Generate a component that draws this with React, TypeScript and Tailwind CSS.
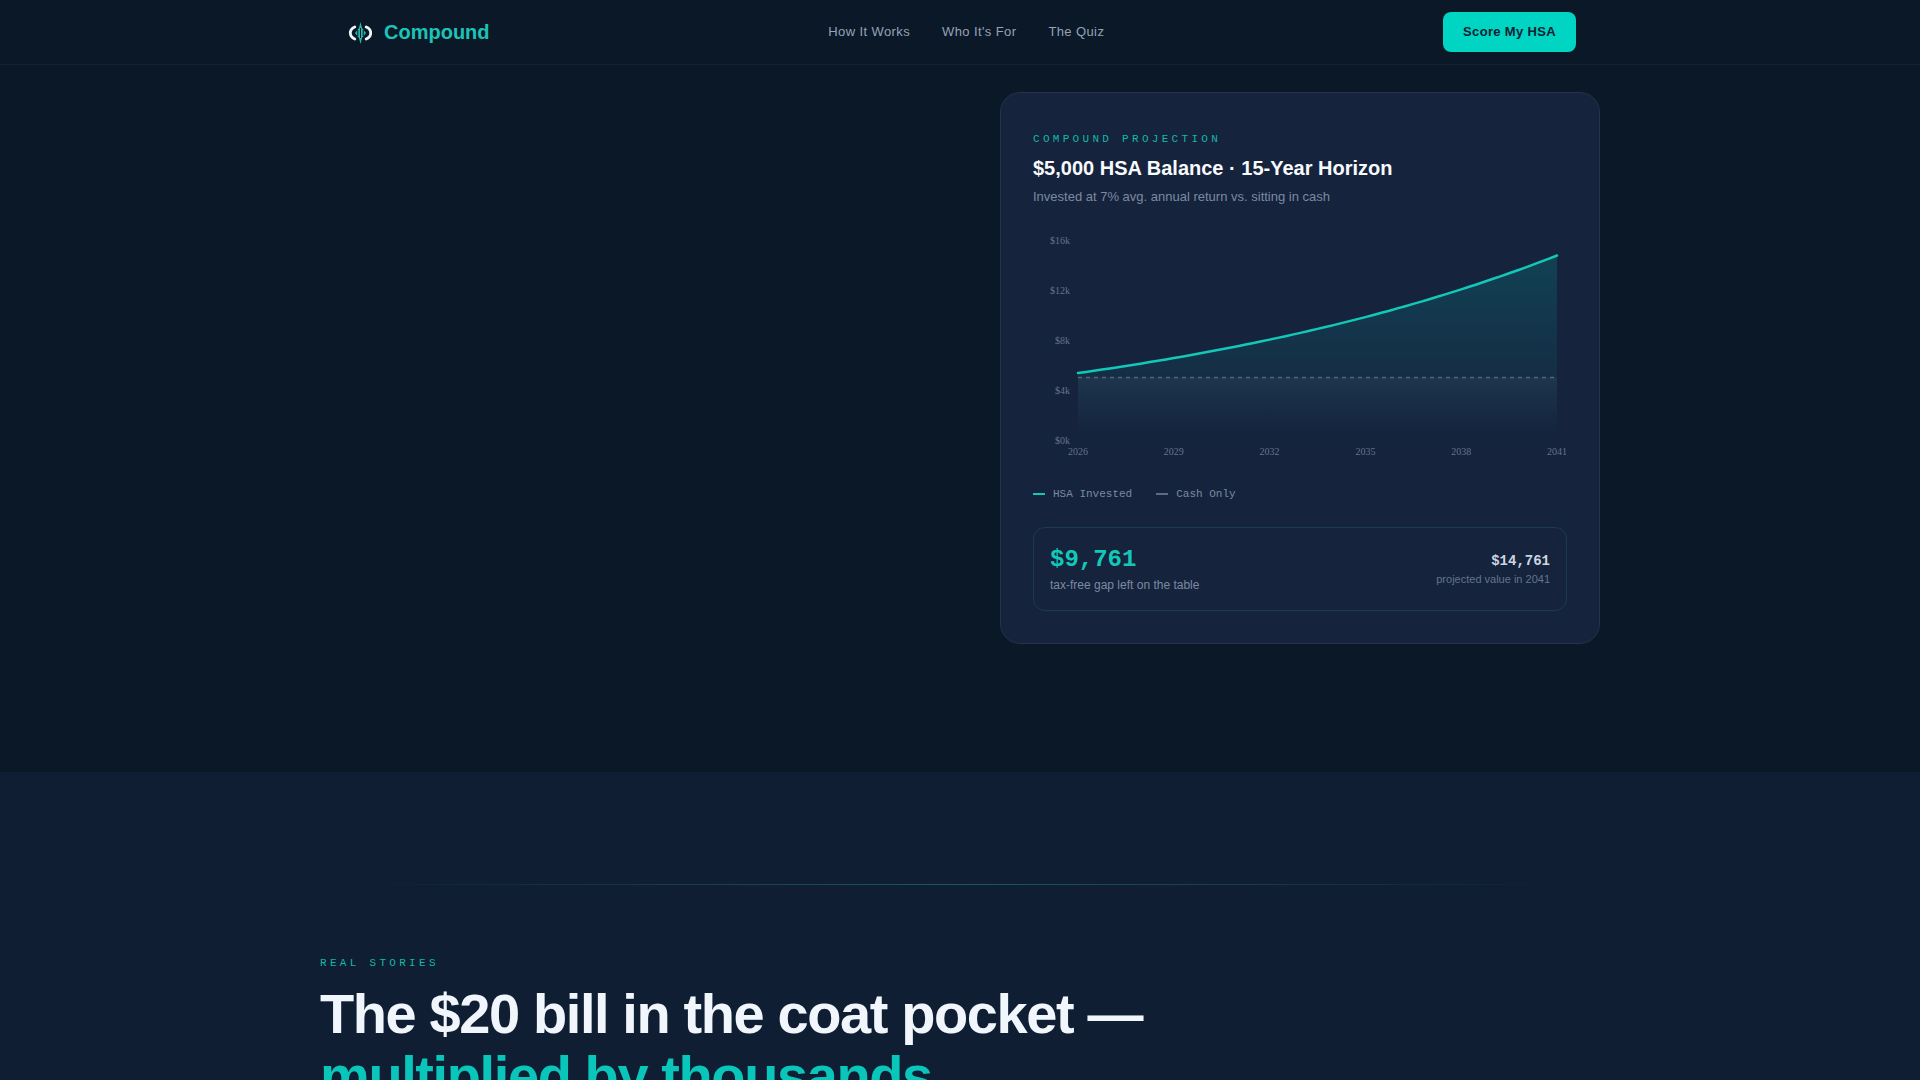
const W = 534;
const X0 = 45; // chart left inside the svg
const X1 = 524;
const base = 200;

// 1k = 12.5px on the y axis, curve follows 7% a year
const yAt = (t: number) => base - 5.35 * Math.pow(1.07, t) * 12.5;
const xAt = (t: number) => X0 + (t * (X1 - X0)) / 15;

const steps = Array.from({ length: 61 }, (_, i) => i / 4);
const linePath = steps.map((t, i) => `${i === 0 ? "M" : "L"}${xAt(t).toFixed(1)} ${yAt(t).toFixed(1)}`).join(" ");
const areaPath = `${linePath} L${X1} ${base} L${X0} ${base} Z`;

const navLinks = ["How It Works", "Who It's For", "The Quiz"];
const yLabels = [
  { label: "$16k", y: 4 },
  { label: "$12k", y: 54 },
  { label: "$8k", y: 104 },
  { label: "$4k", y: 154 },
  { label: "$0k", y: 204 },
];
const years = ["2026", "2029", "2032", "2035", "2038", "2041"];

function Logo() {
  return (
    <svg width="28" height="28" viewBox="0 0 28 28" fill="none">
      <path d="M16.5 4 L18 10 L22 15 L18 20 L16.5 26 L15 20 L11 15 L15 10 Z" fill="#2dd4bf" opacity="0.85" />
      <path d="M10.8 9 C7.6 10.3 6.3 12.6 6.3 15 C6.3 17.4 7.6 19.7 10.8 21" stroke="#f1f5f9" strokeWidth="2.8" strokeLinecap="round" />
      <path d="M22.2 9 C25.4 10.3 26.7 12.6 26.7 15 C26.7 17.4 25.4 19.7 22.2 21" stroke="#f1f5f9" strokeWidth="2.8" strokeLinecap="round" />
      <path d="M16.5 10 V20 M13.8 12 V18 M19.2 12 V18" stroke="#0b1827" strokeWidth="1" />
    </svg>
  );
}

function Nav() {
  return (
    <nav className="h-[65px] border-b border-[#14222f] bg-[#0b1827]">
      <div className="mx-auto flex h-16 max-w-[1280px] items-center justify-between px-6">
        <div className="flex items-center gap-3">
          <Logo />
          <span className="text-[20px] font-bold text-[#1cc4b6]">Compound</span>
        </div>
        <div className="flex items-center gap-8">
          {navLinks.map((link) => (
            <a key={link} className="text-[13px] tracking-[0.03em] text-[#94a3b8]">
              {link}
            </a>
          ))}
        </div>
        <button className="h-10 rounded-lg bg-[#00d4c2] px-5 text-[13px] font-bold tracking-[0.026em] text-[#0b2230]">
          Score My HSA
        </button>
      </div>
    </nav>
  );
}

function Chart() {
  return (
    <svg width={W} height="216" viewBox={`0 0 ${W} 216`} className="block overflow-visible">
      <defs>
        <linearGradient id="investGrad" x1="0" y1="0" x2="0" y2="1">
          <stop offset="0%" stopColor="#00d4c2" stopOpacity="0.17" />
          <stop offset="100%" stopColor="#00d4c2" stopOpacity="0" />
        </linearGradient>
        <linearGradient id="cashGrad" x1="0" y1="0" x2="0" y2="1">
          <stop offset="0%" stopColor="#94a3b8" stopOpacity="0.07" />
          <stop offset="100%" stopColor="#94a3b8" stopOpacity="0" />
        </linearGradient>
      </defs>
      <path d={areaPath} fill="url(#investGrad)" />
      <rect x={X0} y="137" width={X1 - X0} height="50" fill="url(#cashGrad)" />
      <line x1={X0} y1="137.5" x2={X1} y2="137.5" stroke="#94a3b8" strokeWidth="1.5" strokeDasharray="4 4" opacity="0.45" />
      <path d={linePath} fill="none" stroke="#14c8b8" strokeWidth="2.5" strokeLinecap="round" strokeLinejoin="round" />
      {yLabels.map((t) => (
        <text key={t.label} x="37" y={t.y} textAnchor="end" fontSize="10" fill="#64748b" fontFamily="'Liberation Serif', serif">
          {t.label}
        </text>
      ))}
      {years.map((yr, i) => (
        <text key={yr} x={X0 + (i * (X1 - X0)) / 5} y="215" textAnchor="middle" fontSize="10" fill="#64748b" fontFamily="'Liberation Serif', serif">
          {yr}
        </text>
      ))}
    </svg>
  );
}

function ProjectionCard() {
  return (
    <div className="rounded-[20px] border border-[#24324a] bg-[#15233d] px-8 pb-8 pt-[39px]">
      <div className="font-['Liberation_Mono',monospace] text-[11px] leading-[14px] tracking-[0.3em] text-[#14b8a6]">
        COMPOUND PROJECTION
      </div>
      <h3 className="mt-[8px] text-[20px] font-bold leading-[28px] text-[#f8fafc]">
        $5,000 HSA Balance · 15-Year Horizon
      </h3>
      <p className="mt-[5px] text-[13px] leading-[20px] text-[#7c8aa0]">
        Invested at 7% avg. annual return vs. sitting in cash
      </p>
      <div className="mt-[33px]">
        <Chart />
      </div>
      <div className="mt-[30px] flex items-center gap-6 font-['Liberation_Mono',monospace] text-[11px] leading-[16px] text-[#7c8aa0]">
        <div className="flex items-center gap-2">
          <span className="h-0.5 w-3 bg-[#14c8b8]" />
          HSA Invested
        </div>
        <div className="flex items-center gap-2">
          <span className="h-0.5 w-3 bg-[#5b6b80]" />
          Cash Only
        </div>
      </div>
      <div className="mt-[25px] flex h-[84px] items-center justify-between rounded-xl border border-[#1c3a52] px-4">
        <div className="pb-px">
          <div className="font-['Liberation_Mono',monospace] text-[24px] font-bold leading-[32px] text-[#14c8b8]">$9,761</div>
          <div className="text-[12px] leading-[18px] text-[#7c8aa0]">tax-free gap left on the table</div>
        </div>
        <div className="pb-px text-right">
          <div className="font-['Liberation_Mono',monospace] text-[14px] font-bold leading-[20px] text-[#cbd5e1]">$14,761</div>
          <div className="text-[11px] leading-[16px] text-[#64748b]">projected value in 2041</div>
        </div>
      </div>
    </div>
  );
}

export default function App() {
  return (
    <div className="h-[1080px] overflow-hidden bg-[#0f1e32] font-['Liberation_Sans',Arial,sans-serif]">
      <Nav />
      <section className="h-[707px] bg-[#0b1827] pt-[27px]">
        <div className="mx-auto grid max-w-[1280px] grid-cols-2 gap-20">
          <div />
          <ProjectionCard />
        </div>
      </section>
      <section className="pt-[112px]">
        <div className="mx-auto h-px max-w-[1200px] bg-gradient-to-r from-transparent via-[#1d5666] to-transparent" />
        <div className="mx-auto mt-[71px] max-w-[1280px]">
          <div className="font-['Liberation_Mono',monospace] text-[11px] leading-[14px] tracking-[0.3em] text-[#14b8a6]">
            REAL STORIES
          </div>
          <h2 className="mt-[13px] text-[56px] font-bold leading-[1.1] tracking-[-0.025em] text-[#f0f6fc]">
            The $20 bill in the coat pocket —<br />
            <span className="text-[#0ac5ba]">multiplied by thousands</span>
          </h2>
        </div>
      </section>
    </div>
  );
}
